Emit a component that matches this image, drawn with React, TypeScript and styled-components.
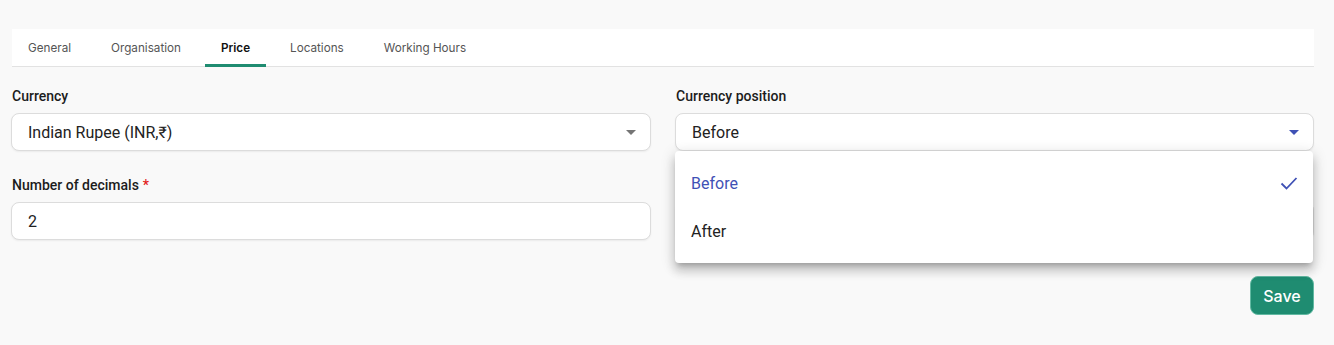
import React from "react";
import styled, { createGlobalStyle } from "styled-components";

const Global = createGlobalStyle`
  html, body { margin: 0; padding: 0; background: #f9f9f9; }
  body { font-family: Roboto, "Liberation Sans", sans-serif; }
  * { box-sizing: border-box; }
`;

const Page = styled.div`
  position: relative;
  padding: 29px 20px 0 12px;
  height: 345px;
`;

const TabBar = styled.div`
  display: flex;
  gap: 8px;
  height: 38px;
  background: #fff;
  border-bottom: 1px solid #e2e2e2;
`;

const Tab = styled.div<{ $active?: boolean }>`
  position: relative;
  display: flex;
  align-items: center;
  padding: 0 16px;
  font-family: Inter, sans-serif;
  font-size: 11.7px;
  font-weight: ${(p) => (p.$active ? 600 : 400)};
  color: ${(p) => (p.$active ? "#111" : "#555")};
  &::after {
    content: "";
    display: ${(p) => (p.$active ? "block" : "none")};
    position: absolute;
    left: 0;
    right: 0;
    bottom: -1px;
    height: 3px;
    background: #1f8c71;
  }
`;

const Grid = styled.div`
  display: grid;
  grid-template-columns: 640px 639px;
  column-gap: 24px;
  row-gap: 24px;
  margin-top: 19px;
  margin-left: -1px;
`;

const Field = styled.div`
  position: relative;
  display: flex;
  flex-direction: column;
`;

const Label = styled.label`
  font-family: Roboto, sans-serif;
  font-size: 14px;
  font-weight: 500;
  line-height: 20px;
  color: #1c1c1c;
  margin-left: 1px;
  margin-bottom: 7px;
`;

const Required = styled.span`
  color: #e21b1b;
  margin-left: 4px;
`;

const InputBox = styled.div`
  display: flex;
  align-items: center;
  justify-content: space-between;
  height: 38px;
  padding: 0 14px 0 16px;
  background: #fff;
  border: 1px solid #dcdcdc;
  border-radius: 8px;
  box-shadow: 0 1px 2px rgba(0, 0, 0, 0.06);
  font-family: Roboto, "DejaVu Sans", sans-serif;
  font-size: 16px;
  color: #222;
`;

const Caret = styled.span<{ $focus?: boolean }>`
  width: 0;
  height: 0;
  border-left: 5px solid transparent;
  border-right: 5px solid transparent;
  border-top: 5px solid ${(p) => (p.$focus ? "#3f51b5" : "#757575")};
`;

const Menu = styled.div`
  position: absolute;
  top: 65px;
  left: 0;
  right: 1px;
  z-index: 2;
  background: #fff;
  border-radius: 4px;
  padding: 8px 0;
  box-shadow: 0 5px 5px -3px rgba(0, 0, 0, 0.2), 0 8px 10px 1px rgba(0, 0, 0, 0.14),
    0 3px 14px 2px rgba(0, 0, 0, 0.12);
`;

const Option = styled.div<{ $selected?: boolean }>`
  display: flex;
  align-items: center;
  justify-content: space-between;
  height: 48px;
  padding: 0 12px 0 16px;
  font-family: Roboto, sans-serif;
  font-size: 16px;
  color: ${(p) => (p.$selected ? "#3f51b5" : "#222")};
`;

const Footer = styled.div`
  display: flex;
  justify-content: flex-end;
  margin-top: 36px;
`;

const SaveButton = styled.button`
  height: 39px;
  width: 64px;
  border-radius: 8px;
  border: 1px solid #62b9a2;
  background: #1f8c71;
  color: #fff;
  font-family: Inter, sans-serif;
  font-size: 16px;
  font-weight: 500;
`;

const Check = () => (
  <svg width="24" height="24" viewBox="0 0 24 24" fill="none">
    <path d="M4.5 12.5l5 5L19.5 7" stroke="#3f51b5" strokeWidth="1.8" />
  </svg>
);

export default function App() {
  return (
    <>
      <Global />
      <Page>
        <TabBar>
          <Tab>General</Tab>
          <Tab>Organisation</Tab>
          <Tab $active>Price</Tab>
          <Tab>Locations</Tab>
          <Tab>Working Hours</Tab>
        </TabBar>
        <Grid>
          <Field>
            <Label>Currency</Label>
            <InputBox>
              <span>Indian Rupee (INR,₹)</span>
              <Caret />
            </InputBox>
          </Field>
          <Field>
            <Label>Currency position</Label>
            <InputBox>
              <span>Before</span>
              <Caret $focus />
            </InputBox>
            <Menu>
              <Option $selected>
                <span>Before</span>
                <Check />
              </Option>
              <Option>
                <span>After</span>
              </Option>
            </Menu>
          </Field>
          <Field>
            <Label>
              Number of decimals<Required>*</Required>
            </Label>
            <InputBox>
              <span>2</span>
            </InputBox>
          </Field>
          <Field>
            <Label>&nbsp;</Label>
            <InputBox />
          </Field>
        </Grid>
        <Footer>
          <SaveButton>Save</SaveButton>
        </Footer>
      </Page>
    </>
  );
}
